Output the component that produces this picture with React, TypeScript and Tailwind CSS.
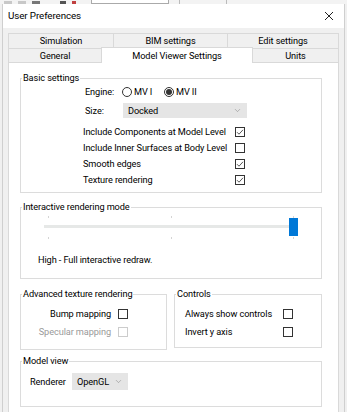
import { ChevronDown } from "lucide-react";
import type { ReactNode } from "react";

function GroupBox({ title, className, children }: { title: string; className?: string; children?: ReactNode }) {
  return (
    <fieldset className={`border border-[#dcdcdc] ${className ?? ""}`}>
      <legend className="ml-[1px] px-[1px] leading-[14px]">{title}</legend>
      {children}
    </fieldset>
  );
}

function CheckBox({ checked, disabled }: { checked?: boolean; disabled?: boolean }) {
  return (
    <span
      className={`flex h-[10px] w-[10px] shrink-0 items-center justify-center border bg-white ${
        disabled ? "border-[#cccccc]" : "border-[#333333]"
      }`}
    >
      {checked && (
        <svg width="8" height="8" viewBox="0 0 8 8">
          <polyline points="1,4.2 3,6.2 7,1.8" fill="none" stroke="#444" strokeWidth="0.9" />
        </svg>
      )}
    </span>
  );
}

function Radio({ checked }: { checked?: boolean }) {
  return (
    <span className="flex h-[10px] w-[10px] items-center justify-center rounded-full border border-[#333333] bg-white">
      {checked && <span className="h-[6px] w-[6px] rounded-full bg-[#333333]" />}
    </span>
  );
}

function Select({ value, className }: { value: string; className?: string }) {
  return (
    <div className={`flex items-center justify-between bg-[#e5e5e5] pl-[5px] pr-[5px] ${className ?? ""}`}>
      <span>{value}</span>
      <ChevronDown size={9} strokeWidth={1.5} color="#8a8a8a" />
    </div>
  );
}

const basicChecks = [
  { label: "Include Components at Model Level", checked: true },
  { label: "Include Inner Surfaces at Body Level", checked: false },
  { label: "Smooth edges", checked: true },
  { label: "Texture rendering", checked: true },
];

export default function App() {
  return (
    <div className="flex h-[412px] w-[347px] flex-col overflow-hidden whitespace-nowrap bg-[#f0f0f0] font-['Roboto','Liberation_Sans',sans-serif] text-[9.2px] tracking-[-0.1px] text-black">
      {/* toolbar behind the dialog */}
      <div className="flex h-[4px] items-end gap-[6px] bg-[#f3f3f3] pl-[4px]">
        <span className="h-[3px] w-[8px] bg-[#c8c8c8]" />
        <span className="h-[3px] w-[8px] bg-[#c8c8c8]" />
        <span className="h-[3px] w-[8px] bg-[#777777]" />
        <span className="ml-[14px] h-[3px] w-[6px] bg-[#555555]" />
        <span className="h-[3px] w-[4px] bg-[#c04040]" />
        <span className="ml-[9px] h-[4px] w-[78px] border-x border-b border-[#aaaaaa] bg-white" />
        <span className="ml-[4px] h-[4px] w-[1px] bg-[#bbbbbb]" />
        <span className="ml-[40px] h-[4px] w-[1px] bg-[#bbbbbb]" />
      </div>

      <div className="mx-[2px] flex flex-1 flex-col border-x border-[#cfcfcf]">
        {/* title bar */}
        <div className="flex h-[24px] items-center justify-between bg-white pl-[5px] pr-[10px]">
          <span className="text-[9.8px]">User Preferences</span>
          <svg width="10" height="10" viewBox="0 0 10 10">
            <path d="M1 1 L9 9 M9 1 L1 9" stroke="#222" strokeWidth="1" />
          </svg>
        </div>

        {/* dialog body */}
        <div className="flex flex-1 flex-col px-[5px] pt-[5px]">
          {/* tab rows */}
          <div className="flex h-[15px]">
            <div className="flex w-[105px] items-center justify-center border-l border-t border-[#d9d9d9]">Simulation</div>
            <div className="flex w-[114px] items-center justify-center border-l border-t border-[#d9d9d9]">BIM settings</div>
            <div className="flex flex-1 items-center justify-center border-x border-t border-[#d9d9d9]">Edit settings</div>
          </div>
          <div className="relative z-10 flex h-[14px] items-start">
            <div className="flex h-[14px] w-[93px] items-center justify-center border-l border-t border-[#d9d9d9]">General</div>
            <div className="-mt-[1px] flex h-[16px] w-[152px] items-start justify-center border-x border-t border-[#d9d9d9] bg-white pt-[1px]">
              Model Viewer Settings
            </div>
            <div className="flex h-[14px] flex-1 items-center justify-center border-r border-t border-[#d9d9d9]">Units</div>
          </div>

          {/* tab page */}
          <div className="flex flex-1 flex-col border border-b-0 border-[#d9d9d9] bg-white pl-[11px] pr-[16px] pt-[8px]">
            <GroupBox title="Basic settings" className="h-[122px]">
              <div className="flex h-[14px] items-center pl-[64px]">
                <span className="w-[37px]">Engine:</span>
                <Radio />
                <span className="ml-[2px] w-[30px]">MV I</span>
                <Radio checked />
                <span className="ml-[2px]">MV II</span>
              </div>
              <div className="mt-[4px] flex h-[15px] items-center pl-[64px]">
                <span className="w-[38px]">Size:</span>
                <Select value="Docked" className="h-[15px] w-[124px]" />
              </div>
              <div className="mt-[6px] flex flex-col pl-[62px]">
                {basicChecks.map((c) => (
                  <div key={c.label} className="flex h-[16px] items-center">
                    <span className="w-[152px]">{c.label}</span>
                    <CheckBox checked={c.checked} />
                  </div>
                ))}
              </div>
            </GroupBox>

            <GroupBox title="Interactive rendering mode" className="mt-[7px] h-[79px]">
              <div className="relative ml-[23px] mt-[1px] h-[24px] w-[254px]">
                <span className="absolute left-[4px] top-[1px] h-[2px] w-[1px] bg-[#d4d4d4]" />
                <span className="absolute left-[127px] top-[1px] h-[2px] w-[1px] bg-[#d4d4d4]" />
                <span className="absolute left-[249px] top-[1px] h-[2px] w-[1px] bg-[#d4d4d4]" />
                <span className="absolute left-0 top-[10px] h-[3px] w-[253px] bg-[#e6e8e7]" />
                <span className="absolute left-[245px] top-[3px] h-[18px] w-[9px] bg-[#0078d7]" />
                <span className="absolute bottom-0 left-[4px] h-[2px] w-[1px] bg-[#d4d4d4]" />
                <span className="absolute bottom-0 left-[127px] h-[2px] w-[1px] bg-[#d4d4d4]" />
                <span className="absolute bottom-0 left-[249px] h-[2px] w-[1px] bg-[#d4d4d4]" />
              </div>
              <div className="ml-[17px] mt-[14px] leading-[14px]">High - Full interactive redraw.</div>
            </GroupBox>

            <div className="mt-[8px] flex items-start gap-[7px]">
              <GroupBox title="Advanced texture rendering" className="h-[63px] w-[147px]">
                <div className="mt-[4px] flex h-[18px] items-center">
                  <span className="w-[90px] text-right">Bump mapping</span>
                  <span className="ml-[7px]">
                    <CheckBox />
                  </span>
                </div>
                <div className="flex h-[18px] items-center">
                  <span className="w-[90px] text-right text-[#9a9a9a]">Specular mapping</span>
                  <span className="ml-[7px]">
                    <CheckBox disabled />
                  </span>
                </div>
              </GroupBox>
              <GroupBox title="Controls" className="h-[61px] w-[148px]">
                <div className="mt-[4px] flex h-[18px] items-center pl-[10px]">
                  <span className="w-[98px]">Always show controls</span>
                  <CheckBox />
                </div>
                <div className="flex h-[18px] items-center pl-[10px]">
                  <span className="w-[98px]">Invert y axis</span>
                  <CheckBox />
                </div>
              </GroupBox>
            </div>

            <GroupBox title="Model view" className="mt-[4px] h-[53px]">
              <div className="mt-[5px] flex h-[17px] items-center pl-[9px]">
                <span className="w-[42px]">Renderer</span>
                <Select value="OpenGL" className="h-[17px] w-[56px]" />
              </div>
            </GroupBox>
          </div>
        </div>
      </div>
    </div>
  );
}
